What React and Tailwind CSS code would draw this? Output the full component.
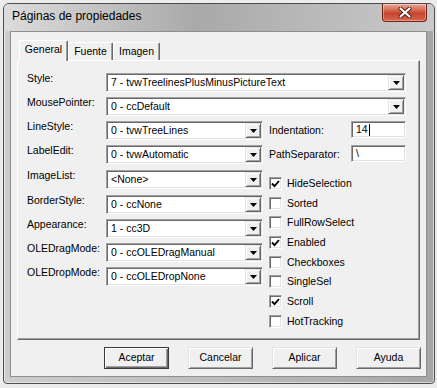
import React from 'react';

// classic 3D edges
const sunken =
  'border border-t-[#a0a0a0] border-l-[#a0a0a0] border-r-white border-b-white shadow-[inset_1px_1px_0_#696969,inset_-1px_-1px_0_#e3e3e3]';
const raised =
  'border border-t-[#e3e3e3] border-l-[#e3e3e3] border-r-[#696969] border-b-[#696969] shadow-[inset_1px_1px_0_#ffffff,inset_-1px_-1px_0_#a0a0a0]';

const DropArrow = () => (
    <div className={`w-[16px] h-[15px] mt-[1px] mr-[1px] shrink-0 bg-[#f0f0f0] flex items-center justify-center ${raised}`}>
        <svg width="7" height="4" viewBox="0 0 7 4">
            <path d="M0 0h7L3.5 4z" fill="#000" />
        </svg>
    </div>
);

const Combo = ({ value, className = '' }) => (
    <div className={`h-[19px] flex bg-white ${sunken} ${className}`}>
        <span className="flex-1 pl-[4px] leading-[17px] whitespace-nowrap overflow-hidden">{value}</span>
        <DropArrow />
    </div>
);

const Row = ({ label, value, wide, className = '' }) => (
    <div className={`flex items-start h-[19px] ${className}`}>
        <span className="w-[79px] shrink-0 leading-[13px] -mt-[1px] whitespace-nowrap">{label}</span>
        <Combo value={value} className={wide ? 'flex-1' : 'w-[157px]'} />
    </div>
);

const Check = ({ label, checked }) => (
    <div className="flex items-center h-[13px]">
        <div className={`w-[13px] h-[13px] shrink-0 bg-white flex items-center justify-center ${sunken}`}>
            {checked && (
                <svg width="9" height="8" viewBox="0 0 9 8">
                    <path d="M1 3.5L3.5 6.2L8 1" fill="none" stroke="#000" strokeWidth="1.9" />
                </svg>
            )}
        </div>
        <span className="ml-[5px] leading-[13px] whitespace-nowrap">{label}</span>
    </div>
);

const TextBox = ({ value, caret }) => (
    <div className={`w-[55px] h-[17px] ml-auto bg-white flex items-center pl-[4px] ${sunken}`}>
        <span className="leading-[15px]">{value}</span>
        {caret && <span className="w-[1px] h-[12px] bg-black ml-[1px]" />}
    </div>
);

const Button = ({ children, def }) => (
    <div
        className={`w-[65px] h-[22px] flex items-center justify-center bg-[#f0f0f0] ${
            def
                ? 'border border-[#3a3a3a] shadow-[inset_1px_1px_0_#ffffff,inset_-1px_-1px_0_#696969,inset_-2px_-2px_0_#a0a0a0]'
                : raised
        }`}
    >
        {children}
    </div>
);

const checks = [
    ['HideSelection', true],
    ['Sorted', false],
    ['FullRowSelect', false],
    ['Enabled', true],
    ['Checkboxes', false],
    ['SingleSel', false],
    ['Scroll', true],
    ['HotTracking', false],
];

export default function App() {
    return (
        <div className="w-[437px] h-[388px] overflow-hidden bg-[#ececec] pt-[3px] pl-[3px] text-black text-[10.5px] font-['Liberation_Sans',Arial,sans-serif]">
            <div className="w-[432px] h-[381px] flex flex-col rounded-t-[6px] rounded-b-[4px] border border-[#4e4e4e] bg-gradient-to-r from-[#cdcdcd] via-[#bcbcbc] to-[#a6a6a6] shadow-[inset_0_0_0_1px_rgba(255,255,255,0.55)]">
                {/* title bar */}
                <div className="h-[27px] shrink-0 flex items-start rounded-t-[5px] bg-gradient-to-r from-[#dcdcdc] via-[#a9a9a9] via-45% to-[#cacaca]">
                    <span className="ml-[8px] mt-[5px] leading-[15px] text-[12px]">Páginas de propiedades</span>
                    <div className="ml-auto mr-[7px] w-[45px] h-[18px] rounded-b-[4px] border border-t-0 border-[#6b2418] bg-gradient-to-b from-[#e9a898] via-[#c7432c] via-55% to-[#d8654b] shadow-[inset_0_0_0_1px_rgba(255,255,255,0.35)] flex items-center justify-center">
                        <svg width="14" height="11" viewBox="0 0 14 11">
                            <path d="M2.5 1.5L11.5 9.5M11.5 1.5L2.5 9.5" stroke="#4a1a12" strokeWidth="4" strokeLinecap="round" />
                            <path d="M2.5 1.5L11.5 9.5M11.5 1.5L2.5 9.5" stroke="#ffffff" strokeWidth="2.2" strokeLinecap="round" />
                        </svg>
                    </div>
                </div>

                {/* client area */}
                <div className="flex-1 ml-[6px] mr-[7px] mb-[6px] border border-[#8e8e8e] bg-[#f0f0f0] pt-[8px] px-[6px]">
                    {/* tabs */}
                    <div className="flex items-end h-[20px] pl-[2px]">
                        <div className="relative z-10 w-[49px] h-[21px] -mb-[1px] pb-[3px] flex items-center justify-center bg-[#f0f0f0] rounded-t-[2px] border border-b-0 border-t-white border-l-white border-r-[#696969] shadow-[inset_-1px_0_0_#a0a0a0]">
                            General
                        </div>
                        <div className="w-[45px] h-[18px] flex items-center justify-center rounded-t-[2px] border border-b-0 border-t-white border-l-white border-r-[#696969] shadow-[inset_-1px_0_0_#a0a0a0]">
                            Fuente
                        </div>
                        <div className="w-[47px] h-[18px] flex items-center justify-center rounded-t-[2px] border border-b-0 border-t-white border-l-white border-r-[#696969] shadow-[inset_-1px_0_0_#a0a0a0]">
                            Imagen
                        </div>
                    </div>

                    {/* tab page */}
                    <div className="h-[280px] border border-t-white border-l-white border-r-[#696969] border-b-[#696969] shadow-[inset_-1px_-1px_0_#a0a0a0] pt-[12px] pl-[9px] pr-[13px] flex flex-col gap-[5px]">
                        <Row label="Style:" value="7 - tvwTreelinesPlusMinusPictureText" wide />
                        <Row label="MousePointer:" value="0 - ccDefault" wide />
                        <div className="flex">
                            <div className="flex flex-col gap-[5px]">
                                <Row label="LineStyle:" value="0 - tvwTreeLines" />
                                <Row label="LabelEdit:" value="0 - tvwAutomatic" />
                                <Row label="ImageList:" value="<None>" className="mt-[1px]" />
                                <Row label="BorderStyle:" value="0 - ccNone" className="mt-[1px]" />
                                <Row label="Appearance:" value="1 - cc3D" />
                                <Row label="OLEDragMode:" value="0 - ccOLEDragManual" />
                                <Row label="OLEDropMode:" value="0 - ccOLEDropNone" />
                            </div>
                            <div className="flex-1 ml-[6px] flex flex-col">
                                <div className="flex items-center h-[17px]">
                                    <span className="leading-[13px] mt-[2px]">Indentation:</span>
                                    <TextBox value="14" caret />
                                </div>
                                <div className="flex items-center h-[17px] mt-[7px]">
                                    <span className="leading-[13px] mt-[2px]">PathSeparator:</span>
                                    <TextBox value="\" />
                                </div>
                                <div className="mt-[15px] flex flex-col gap-[6.7px]">
                                    {checks.map(([label, checked]) => (
                                        <Check key={label} label={label} checked={checked} />
                                    ))}
                                </div>
                            </div>
                        </div>
                    </div>

                    {/* buttons */}
                    <div className="mt-[7px] flex justify-end gap-[19px] -mr-[1px]">
                        <Button def>Aceptar</Button>
                        <Button>Cancelar</Button>
                        <Button>Aplicar</Button>
                        <Button>Ayuda</Button>
                    </div>
                </div>
            </div>
        </div>
    );
}
